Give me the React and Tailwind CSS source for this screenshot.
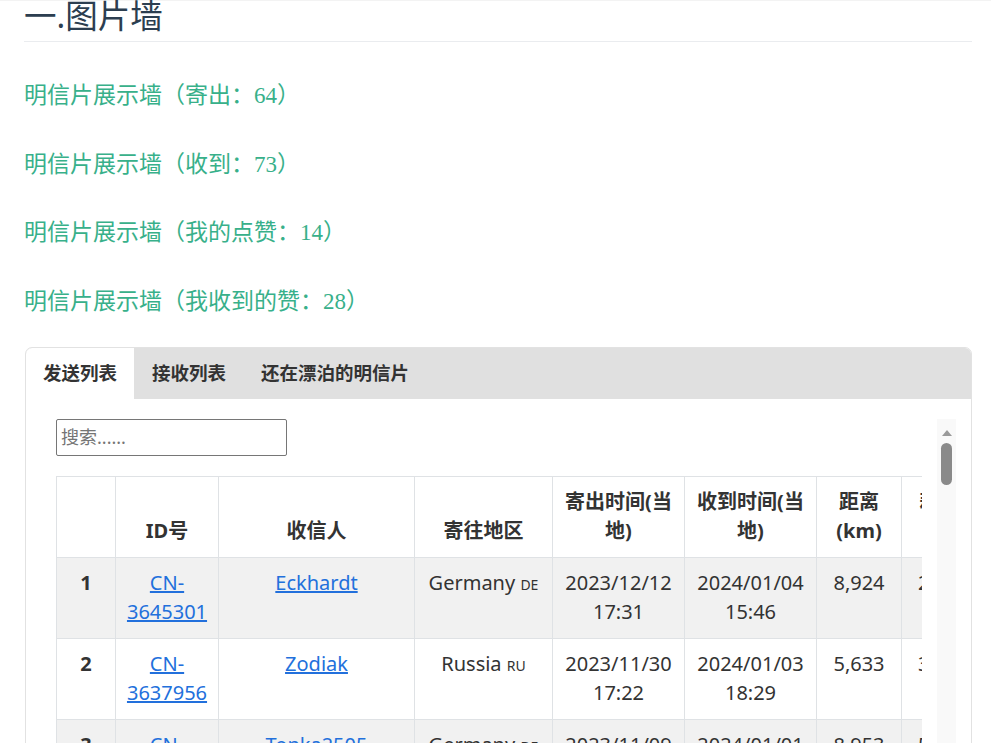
import React from 'react';

const FONT = { fontFamily: '"Noto Sans", "Noto Sans CJK SC", sans-serif' };

const walls = [
  { label: '寄出', count: 64 },
  { label: '收到', count: 73 },
  { label: '我的点赞', count: 14 },
  { label: '我收到的赞', count: 28 },
];

const rows = [
  { no: 1, id: '3645301', name: 'Eckhardt', country: 'Germany', code: 'DE', sent: ['2023/12/12', '17:31'], recv: ['2024/01/04', '15:46'], dist: '8,924', days: '23' },
  { no: 2, id: '3637956', name: 'Zodiak', country: 'Russia', code: 'RU', sent: ['2023/11/30', '17:22'], recv: ['2024/01/03', '18:29'], dist: '5,633', days: '34' },
  { no: 3, id: '3612208', name: 'Tonka2505', country: 'Germany', code: 'DE', sent: ['2023/11/09', '16:05'], recv: ['2024/01/01', '11:20'], dist: '8,953', days: '53' },
];

const colWidths = [59, 103, 196, 138, 132, 132, 85, 96];

export default function App() {
  return (
    <div className="h-[743px] bg-white overflow-hidden" style={FONT}>
      <div className="h-px bg-[#f3f3f3]" />
      <div className="ml-[24px] w-[948px]">
        {/* Title */}
        <h2 className="-mt-[5px] text-[32.5px] leading-[40px] font-normal text-[#2c3e50] pb-[5px] border-b border-[#eaecef]">
          一.图片墙
        </h2>

        {/* Wall links */}
        <div className="mt-[35px] flex flex-col gap-[34.6px]">
          {walls.map((w) => (
            <a key={w.label} href="#" className="flex items-center h-[34px] text-[23px] leading-[34px] text-[#38b08a] no-underline whitespace-nowrap">
              <span>明信片展示墙（{w.label}：<span className="leading-none" style={{ fontFamily: '"Liberation Serif", serif' }}>{w.count}</span>）</span>
            </a>
          ))}
        </div>

        {/* Tabs panel */}
        <div className="mt-[30px] ml-px w-[947px] border border-[#e2e2e2] rounded-[7px] overflow-hidden">
          <div className="flex bg-[#e0e0e0] h-[51px] text-[18.5px] font-bold text-[#333]">
            <div className="px-[17px] flex items-center bg-white rounded-tl-[6px]">发送列表</div>
            <div className="px-[18px] flex items-center">接收列表</div>
            <div className="px-[17px] flex items-center">还在漂泊的明信片</div>
          </div>

          <div className="flex pl-[30px] pt-[20px] pr-[15px] h-[420px]">
            <div className="flex-1 min-w-0 pr-[15px]">
              <input
                type="text"
                placeholder="搜索......"
                className="block w-[231px] h-[37px] border border-[#767676] rounded-[2px] px-[4px] text-[18px] text-[#333] placeholder:text-[#757575] outline-none"
              />
              <div className="mt-[20px] overflow-hidden">
                <table className="table-fixed border-collapse text-[20px] leading-[29px] text-[#333]" style={{ width: colWidths.reduce((a, b) => a + b, 0) }}>
                  <colgroup>
                    {colWidths.map((w, i) => (
                      <col key={i} style={{ width: w }} />
                    ))}
                  </colgroup>
                  <thead>
                    <tr className="bg-white">
                      {['', 'ID号', '收信人', '寄往地区', '寄出时间(当地)', '收到时间(当地)', '距离(km)', '耗时天数'].map((h, i) => (
                        <th key={i} className="border border-[#dfe2e5] px-[10px] pt-[10px] pb-[12px] align-bottom text-center font-bold">
                          {h}
                        </th>
                      ))}
                    </tr>
                  </thead>
                  <tbody>
                    {rows.map((r) => (
                      <tr key={r.no} className={r.no % 2 === 1 ? 'bg-[#f1f1f1]' : 'bg-white'}>
                        <td className="border border-[#dfe2e5] px-[10px] pt-[10px] pb-[12px] align-top text-center font-bold">{r.no}</td>
                        <td className="border border-[#dfe2e5] px-[10px] pt-[10px] pb-[12px] align-top text-center">
                          <a href="#" className="text-[#2270dc] underline">CN-{r.id}</a>
                        </td>
                        <td className="border border-[#dfe2e5] px-[10px] pt-[10px] pb-[12px] align-top text-center">
                          <a href="#" className="text-[#2270dc] underline">{r.name}</a>
                        </td>
                        <td className="border border-[#dfe2e5] px-[10px] pt-[10px] pb-[12px] align-top text-center whitespace-nowrap">
                          {r.country} <span className="text-[14px] text-[#333]">{r.code}</span>
                        </td>
                        <td className="border border-[#dfe2e5] px-[10px] pt-[10px] pb-[12px] align-top text-center">
                          {r.sent[0]}<br />{r.sent[1]}
                        </td>
                        <td className="border border-[#dfe2e5] px-[10px] pt-[10px] pb-[12px] align-top text-center">
                          {r.recv[0]}<br />{r.recv[1]}
                        </td>
                        <td className="border border-[#dfe2e5] px-[10px] pt-[10px] pb-[12px] align-top text-center">{r.dist}</td>
                        <td className="border border-[#dfe2e5] px-[10px] pt-[10px] pb-[12px] align-top text-left pl-[16px]">{r.days}</td>
                      </tr>
                    ))}
                  </tbody>
                </table>
              </div>
            </div>

            {/* Scrollbar */}
            <div className="w-[19px] bg-[#f9f9f9] flex flex-col items-center">
              <svg width="12" height="8" viewBox="0 0 12 8" className="mt-[10px]">
                <polygon points="6,1 11,7 1,7" fill="#9a9a9a" />
              </svg>
              <div className="mt-[6px] w-[11px] h-[42px] rounded-full bg-[#8a8a8a]" />
            </div>
          </div>
        </div>
      </div>
    </div>
  );
}
